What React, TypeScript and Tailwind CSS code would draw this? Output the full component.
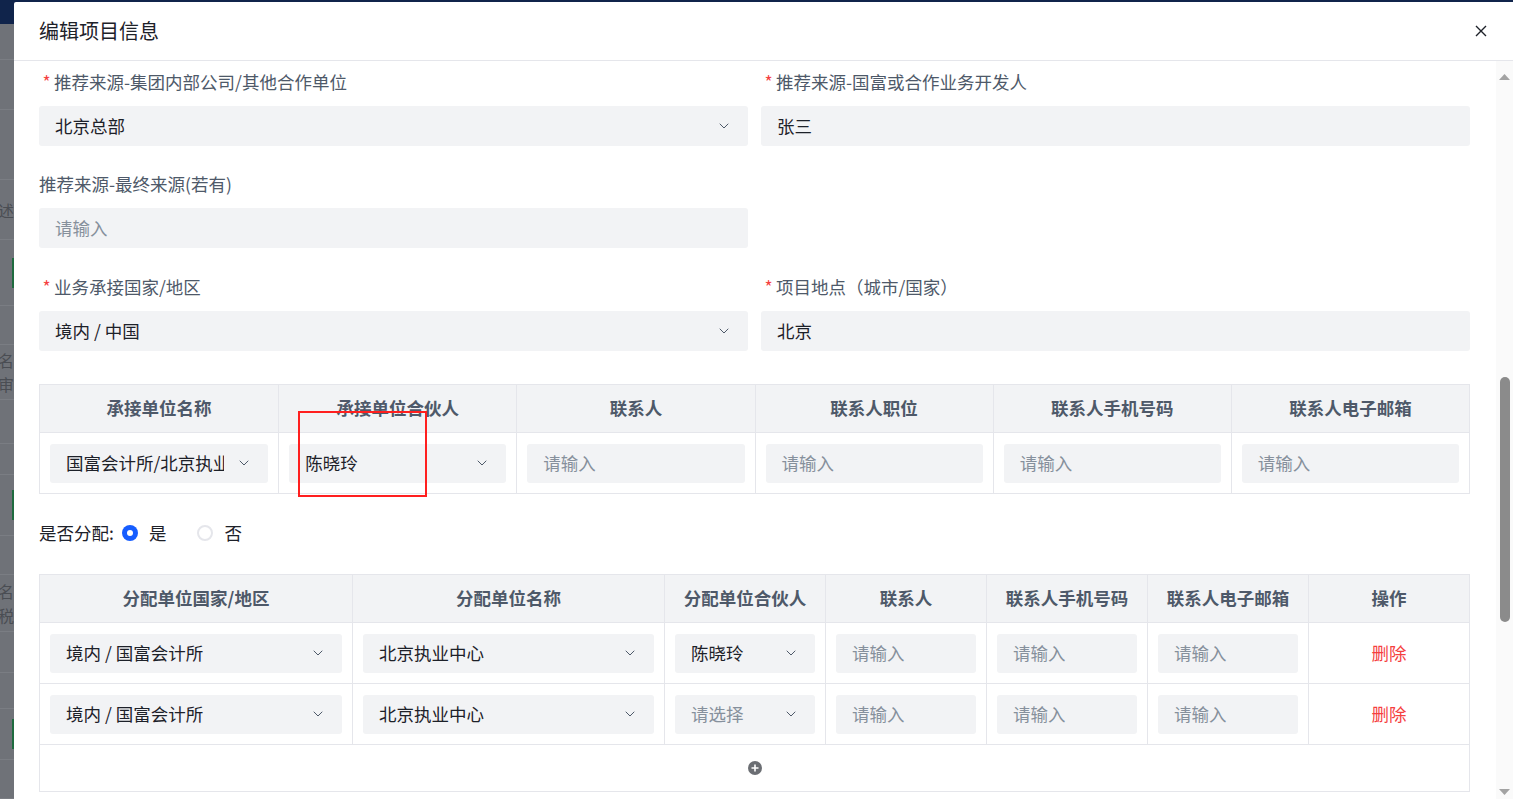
import { ChevronDown } from 'lucide-react';

type Col = { title: string };

const strip = [
  { h: 36 },
  { h: 50 },
  { h: 70 },
  { h: 60, text: ['述'] },
  { h: 66, green: true },
  { h: 39 },
  { h: 55, text: ['名', '审'] },
  { h: 44 },
  { h: 31 },
  { h: 61, green: true },
  { h: 39 },
  { h: 57, text: ['名', '税'] },
  { h: 41 },
  { h: 36 },
  { h: 51, green: true },
  { h: 39 },
];

function BackdropStrip() {
  return (
    <div className="flex w-[14px] shrink-0 flex-col overflow-hidden">
      <div className="h-[24px] shrink-0 bg-[#10244b]" />
      {strip.map((s, i) => (
        <div
          key={i}
          style={{ height: s.h }}
          className="flex shrink-0 items-center justify-between border-b border-[#7a7d83] bg-[#6f7278]"
        >
          <div className="-ml-[2px] flex flex-col text-[16px] leading-[24px] text-[#4a4d53]">
            {s.text?.map((t, j) => <span key={j}>{t}</span>)}
          </div>
          {s.green && <div className="h-[30px] w-[2px] bg-[#1f6b3f]" />}
        </div>
      ))}
    </div>
  );
}

function Label(props: { text: string; required?: boolean }) {
  return (
    <div className="flex h-[24px] items-center text-[17.5px] text-[#4e5969]">
      {props.required && <span className="w-[15px] text-center text-[#f53f3f]">*</span>}
      <span>{props.text}</span>
    </div>
  );
}

function Select(props: { value?: string; placeholder?: string; height?: string }) {
  return (
    <div className={`flex ${props.height ?? 'h-[40px]'} items-center rounded-[3px] bg-[#f2f3f5] pl-4 pr-4`}>
      <span
        className={`flex-1 overflow-hidden whitespace-nowrap ${
          props.value ? 'text-[#1d2129]' : 'text-[#86909c]'
        }`}
      >
        {props.value ?? props.placeholder}
      </span>
      <ChevronDown size={16} strokeWidth={1.5} className="ml-3 shrink-0 text-[#4e5969]" />
    </div>
  );
}

function Input(props: { value?: string; placeholder?: string; height?: string }) {
  return (
    <div className={`flex ${props.height ?? 'h-[40px]'} items-center rounded-[3px] bg-[#f2f3f5] pl-4`}>
      <span className={`whitespace-nowrap ${props.value ? 'text-[#1d2129]' : 'text-[#86909c]'}`}>
        {props.value ?? props.placeholder ?? '请输入'}
      </span>
    </div>
  );
}

function Radio(props: { checked?: boolean }) {
  if (props.checked) {
    return (
      <span className="flex h-[16px] w-[16px] items-center justify-center rounded-full bg-[#165dff]">
        <span className="block h-[6px] w-[6px] rounded-full bg-white" />
      </span>
    );
  }
  return <span className="block h-[16px] w-[16px] rounded-full border-2 border-[#e5e6eb] bg-white" />;
}

const partnerCols: Col[] = [
  { title: '承接单位名称' },
  { title: '承接单位合伙人' },
  { title: '联系人' },
  { title: '联系人职位' },
  { title: '联系人手机号码' },
  { title: '联系人电子邮箱' },
];

const allocCols: Col[] = [
  { title: '分配单位国家/地区' },
  { title: '分配单位名称' },
  { title: '分配单位合伙人' },
  { title: '联系人' },
  { title: '联系人手机号码' },
  { title: '联系人电子邮箱' },
  { title: '操作' },
];

const allocRows = [
  { country: '境内 / 国富会计所', unit: '北京执业中心', partner: '陈晓玲' },
  { country: '境内 / 国富会计所', unit: '北京执业中心', partner: undefined },
];

function PartnerTable() {
  return (
    <div className="border border-[#e5e6eb]">
      <div className="grid grid-cols-6 border-b border-[#e5e6eb] bg-[#f2f3f5]">
        {partnerCols.map((c, i) => (
          <div
            key={c.title}
            className={`flex h-[47px] items-center justify-center font-bold text-[#4e5969] ${
              i > 0 ? 'border-l border-[#e5e6eb]' : ''
            }`}
          >
            {c.title}
          </div>
        ))}
      </div>
      <div className="grid grid-cols-6">
        <div className="flex h-[60px] items-center px-[10px]">
          <div className="w-full">
            <Select value="国富会计所/北京执业中心" height="h-[39px]" />
          </div>
        </div>
        <div className="flex h-[60px] items-center border-l border-[#e5e6eb] px-[10px]">
          <div className="w-full">
            <Select value="陈晓玲" height="h-[39px]" />
          </div>
        </div>
        {[0, 1, 2, 3].map((i) => (
          <div key={i} className="flex h-[60px] items-center border-l border-[#e5e6eb] px-[10px]">
            <div className="w-full">
              <Input height="h-[39px]" />
            </div>
          </div>
        ))}
      </div>
    </div>
  );
}

const allocGrid = 'grid grid-cols-[312px_312px_161px_161px_161px_161px_1fr]';

function AllocTable() {
  return (
    <div className="border border-[#e5e6eb]">
      <div className={`${allocGrid} border-b border-[#e5e6eb] bg-[#f2f3f5]`}>
        {allocCols.map((c, i) => (
          <div
            key={c.title}
            className={`flex h-[47px] items-center justify-center font-bold text-[#4e5969] ${
              i > 0 ? 'border-l border-[#e5e6eb]' : ''
            }`}
          >
            {c.title}
          </div>
        ))}
      </div>
      {allocRows.map((r, idx) => (
        <div key={idx} className={`${allocGrid} border-b border-[#e5e6eb]`}>
          <div className="flex h-[60px] items-center px-[10px]">
            <div className="w-full">
              <Select value={r.country} height="h-[39px]" />
            </div>
          </div>
          <div className="flex h-[60px] items-center border-l border-[#e5e6eb] px-[10px]">
            <div className="w-full">
              <Select value={r.unit} height="h-[39px]" />
            </div>
          </div>
          <div className="flex h-[60px] items-center border-l border-[#e5e6eb] px-[10px]">
            <div className="w-full">
              <Select value={r.partner} placeholder="请选择" height="h-[39px]" />
            </div>
          </div>
          {[0, 1, 2].map((i) => (
            <div key={i} className="flex h-[60px] items-center border-l border-[#e5e6eb] px-[10px]">
              <div className="w-full">
                <Input height="h-[39px]" />
              </div>
            </div>
          ))}
          <div className="flex h-[60px] items-center justify-center border-l border-[#e5e6eb] text-[#f53f3f]">
            删除
          </div>
        </div>
      ))}
      <div className="flex h-[46px] items-center justify-center">
        <svg width="14" height="14" viewBox="0 0 14 14">
          <circle cx="7" cy="7" r="7" fill="#6b6e73" />
          <path d="M7 3.5v7M3.5 7h7" stroke="#fff" strokeWidth="1.6" />
        </svg>
      </div>
    </div>
  );
}

function Scrollbar() {
  return (
    <div className="flex w-[17px] shrink-0 flex-col items-center bg-[#fafafa]">
      <svg width="11" height="6" viewBox="0 0 11 6" className="mt-[13px]">
        <path d="M0 6L5.5 0L11 6Z" fill="#a3a3a3" />
      </svg>
      <div className="mt-[297px] h-[245px] w-[10px] rounded-full bg-[#8b8b8b]" />
      <div className="flex-1" />
      <svg width="11" height="6" viewBox="0 0 11 6" className="mb-[4px]">
        <path d="M0 0L5.5 6L11 0Z" fill="#a3a3a3" />
      </svg>
    </div>
  );
}

export default function App() {
  return (
    <div className="relative flex h-[799px] w-[1513px] overflow-hidden bg-[#10244b] font-['Noto_Sans_CJK_SC','Noto_Sans',sans-serif] text-[17.5px] text-[#1d2129]">
      <BackdropStrip />
      <div className="mt-[2px] flex flex-1 flex-col overflow-hidden rounded-tl-[2px] bg-white">
        <div className="flex h-[59px] shrink-0 items-center justify-between border-b border-[#e5e6eb] pl-[25px] pr-[26px]">
          <span className="text-[20px] text-[#1d2129]">编辑项目信息</span>
          <svg width="12" height="12" viewBox="0 0 12 12">
            <path d="M1 1L11 11M11 1L1 11" stroke="#1d2129" strokeWidth="1.4" />
          </svg>
        </div>
        <div className="flex flex-1 overflow-hidden">
          <div className="ml-[25px] w-[1431px] shrink-0 pt-[9px]">
            <div className="grid grid-cols-2 gap-x-[13px]">
              <div>
                <Label text="推荐来源-集团内部公司/其他合作单位" required />
                <div className="mt-3">
                  <Select value="北京总部" />
                </div>
              </div>
              <div>
                <Label text="推荐来源-国富或合作业务开发人" required />
                <div className="mt-3">
                  <Input value="张三" />
                </div>
              </div>
              <div className="mt-[26px]">
                <Label text="推荐来源-最终来源(若有)" />
                <div className="mt-3">
                  <Input />
                </div>
              </div>
              <div />
              <div className="mt-[27px]">
                <Label text="业务承接国家/地区" required />
                <div className="mt-3">
                  <Select value="境内 / 中国" />
                </div>
              </div>
              <div className="mt-[27px]">
                <Label text="项目地点（城市/国家）" required />
                <div className="mt-3">
                  <Input value="北京" />
                </div>
              </div>
            </div>

            <div className="mt-[33px]">
              <PartnerTable />
            </div>

            <div className="mt-[27px] flex h-[24px] items-center">
              <span>是否分配:</span>
              <span className="ml-2">
                <Radio checked />
              </span>
              <span className="ml-[11px]">是</span>
              <span className="ml-[31px]">
                <Radio />
              </span>
              <span className="ml-[11px]">否</span>
            </div>

            <div className="mt-[29px]">
              <AllocTable />
            </div>
          </div>
          <div className="flex-1" />
          <Scrollbar />
        </div>
      </div>
      <div className="pointer-events-none absolute left-[298px] top-[411px] h-[86px] w-[129px] border-2 border-[#ff1f1f]" />
    </div>
  );
}
